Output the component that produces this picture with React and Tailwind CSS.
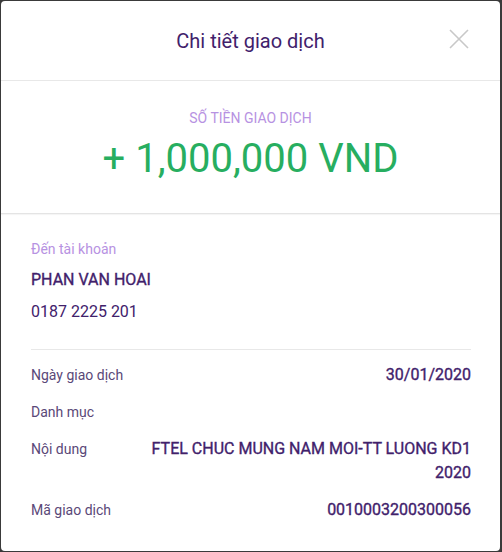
import React from 'react';

const DETAILS = [
  { label: 'Ngày giao dịch', value: '30/01/2020' },
  { label: 'Danh mục', value: '' },
  { label: 'Nội dung', value: 'FTEL CHUC MUNG NAM MOI-TT LUONG KD1 2020' },
  { label: 'Mã giao dịch', value: '0010003200300056' },
];

function CloseIcon() {
  return (
    <svg width="20" height="20" viewBox="0 0 20 20" fill="none" stroke="#c8c8c8" strokeWidth="1.6">
      <path d="M1 1 L19 19 M19 1 L1 19" />
    </svg>
  );
}

export default function App() {
  return (
    <div className="h-[552px] bg-[#3a3a3a] pt-px pl-px pr-[2px] pb-px font-['Roboto',sans-serif]">
      <div className="h-full rounded-[4px] bg-white overflow-hidden">
        {/* Header */}
        <div className="relative flex h-[80px] items-center justify-center border-b border-[#e8e8e8]">
          <h2 className="text-[20px] leading-[24px] text-[#41216b]">Chi tiết giao dịch</h2>
          <button className="absolute right-[31px] top-[28px]">
            <CloseIcon />
          </button>
        </div>

        {/* Amount */}
        <div className="flex flex-col items-center border-b border-[#e4e4e4] shadow-[0_1px_1px_rgba(0,0,0,0.04)] pt-[29px] pb-[30px]">
          <p className="text-[14px] leading-[16px] text-[#b792e2]">SỐ TIỀN GIAO DỊCH</p>
          <p className="mt-[9px] text-[40px] leading-[48px] text-[#27ae60]">+ 1,000,000 VND</p>
        </div>

        {/* Account + details */}
        <div className="pl-[30px] pr-[29px]">
          <div className="border-b border-[#e8e8e8] pt-[25px] pb-[25px]">
            <p className="text-[14px] leading-[20px] text-[#b792e2]">Đến tài khoản</p>
            <p className="mt-[9px] text-[16px] leading-[24px] text-[#41216b] [-webkit-text-stroke:0.35px_#41216b]">PHAN VAN HOAI</p>
            <p className="mt-[8px] text-[16px] leading-[24px] text-[#41216b]">0187 2225 201</p>
          </div>

          <div className="flex flex-col gap-[13px] pt-[13px]">
            {DETAILS.map((row) => (
              <div key={row.label} className="flex items-start">
                <span className="w-[110px] shrink-0 text-[14px] leading-[24px] text-[#5a4878]">{row.label}</span>
                <span className="flex-1 text-right text-[16px] leading-[24px] text-[#41216b] [-webkit-text-stroke:0.35px_#41216b]">
                  {row.value}
                </span>
              </div>
            ))}
          </div>
        </div>
      </div>
    </div>
  );
}
